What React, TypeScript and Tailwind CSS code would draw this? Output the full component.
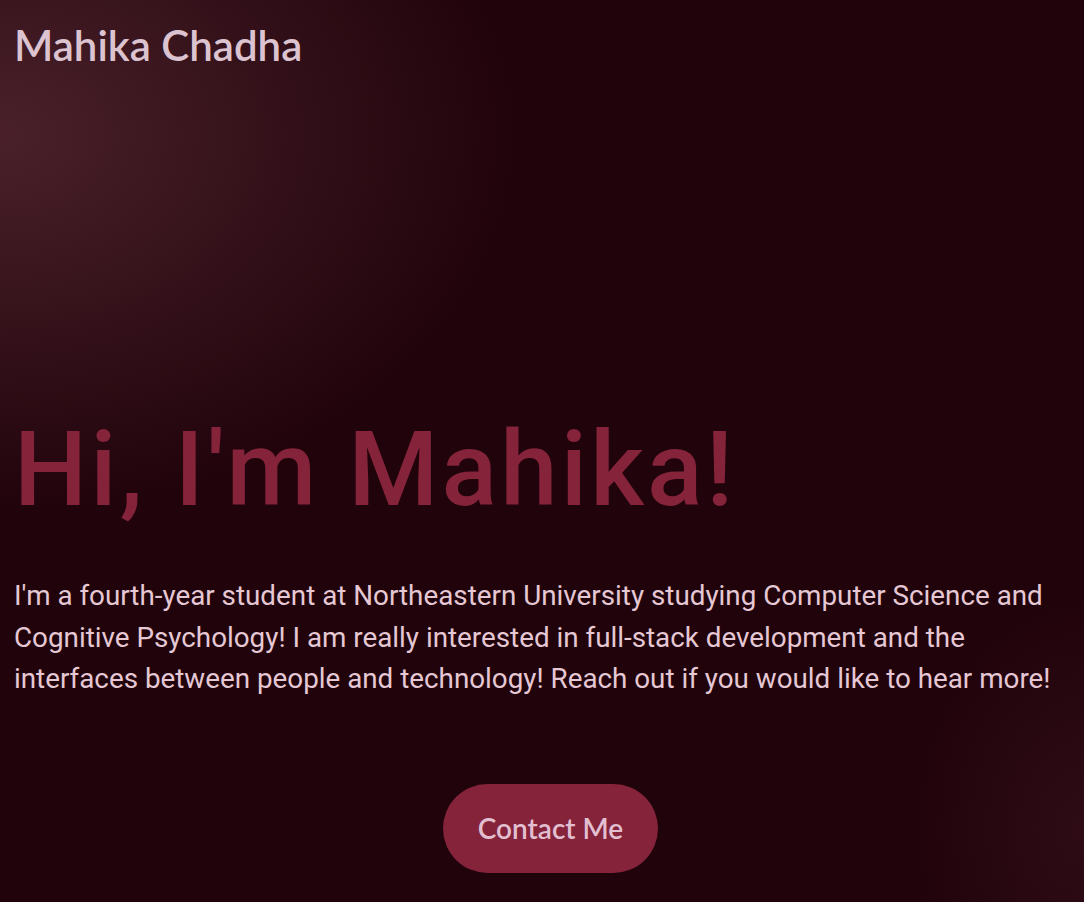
export default function App() {
  return (
    <div className="min-h-screen w-full bg-[#21030b] bg-[radial-gradient(ellipse_48%_42%_at_0%_15%,rgba(78,36,46,0.9)_0%,rgba(33,3,11,0)_100%),radial-gradient(ellipse_16%_26%_at_100%_92%,rgba(56,18,28,0.6)_0%,rgba(33,3,11,0)_100%)] px-[14px] font-['Roboto',sans-serif]">
      <header className="pt-[19px]">
        <h1 className="font-['Lato',sans-serif] text-[42px] font-semibold leading-[52px] text-[#dcc3d0]">
          Mahika Chadha
        </h1>
      </header>
      <main className="flex flex-col">
        <h2 className="mt-[339px] text-[103px] font-medium leading-[120px] tracking-[3.2px] text-[#84233a]">
          Hi, I'm Mahika!
        </h2>
        <p className="mt-[45px] text-[27.8px] leading-[41.5px] text-[#e5c8d4]">
          I'm a fourth-year student at Northeastern University studying Computer Science and Cognitive Psychology! I am really interested in full-stack development and the interfaces between people and technology! Reach out if you would like to hear more!
        </p>
        <div className="mt-[84px] flex justify-center pl-[17px]">
          <button className="h-[89px] w-[215px] rounded-full bg-[#84233a] font-['Lato',sans-serif] text-[28px] font-semibold text-[#e2bfd0]">
            Contact Me
          </button>
        </div>
      </main>
    </div>
  );
}
